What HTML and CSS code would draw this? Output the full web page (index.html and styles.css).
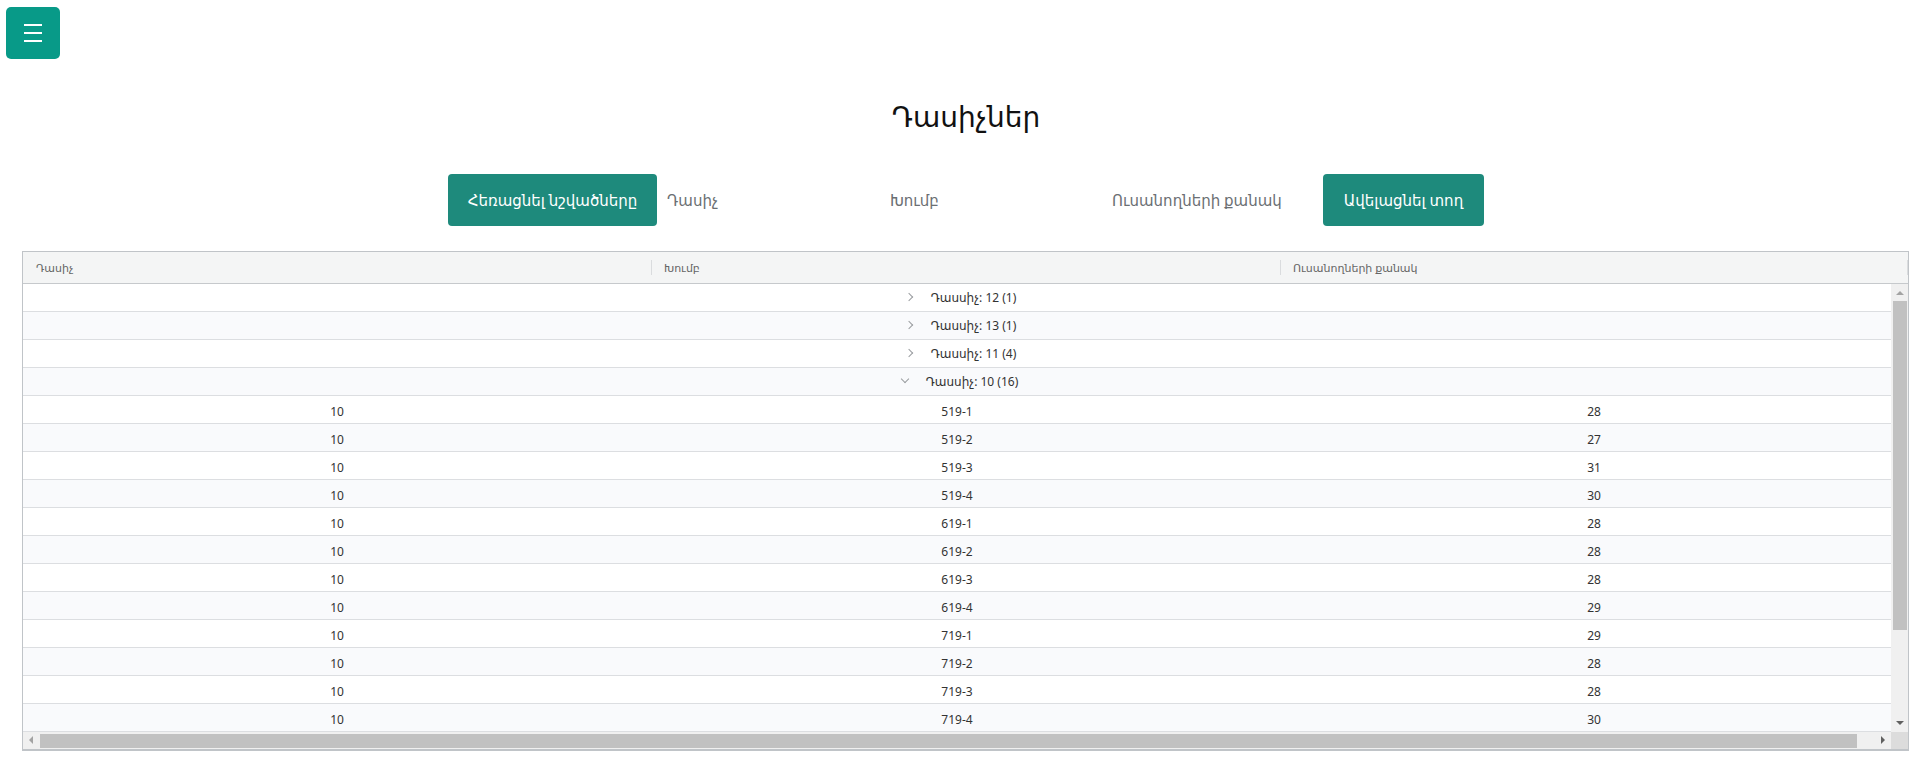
FILE: index.html
```html
<!DOCTYPE html>
<html lang="hy">
<head>
<meta charset="utf-8">
<title>Դասիչներ</title>
<link rel="stylesheet" href="styles.css">
</head>
<body>
<div class="topbar">
  <button class="menu-btn" aria-label="menu"><span></span><span></span><span></span></button>
</div>
<h1 class="title">Դասիչներ</h1>
<div class="toolbar">
  <button class="btn">Հեռացնել նշվածները</button>
  <span class="lbl lbl-1">Դասիչ</span>
  <span class="lbl lbl-2">Խումբ</span>
  <span class="lbl lbl-3">Ուսանողների քանակ</span>
  <button class="btn btn-add">Ավելացնել տող</button>
</div>
<div class="grid">
  <div class="grid-head">
    <div class="hcell">Դասիչ</div>
    <div class="hcell sep">Խումբ</div>
    <div class="hcell sep">Ուսանողների քանակ</div>
    <div class="hspacer"></div>
  </div>
  <div class="grid-main">
    <div class="rows">
      <div class="row group"><span class="chev chev-r"></span><span class="gtext">Դասսիչ: 12 (1)</span></div>
      <div class="row group alt"><span class="chev chev-r"></span><span class="gtext">Դասսիչ: 13 (1)</span></div>
      <div class="row group"><span class="chev chev-r"></span><span class="gtext">Դասսիչ: 11 (4)</span></div>
      <div class="row group alt"><span class="chev chev-d"></span><span class="gtext">Դասսիչ: 10 (16)</span></div>
      <div class="row data"><div class="c1">10</div><div class="c2">519-1</div><div class="c3">28</div></div>
      <div class="row data alt"><div class="c1">10</div><div class="c2">519-2</div><div class="c3">27</div></div>
      <div class="row data"><div class="c1">10</div><div class="c2">519-3</div><div class="c3">31</div></div>
      <div class="row data alt"><div class="c1">10</div><div class="c2">519-4</div><div class="c3">30</div></div>
      <div class="row data"><div class="c1">10</div><div class="c2">619-1</div><div class="c3">28</div></div>
      <div class="row data alt"><div class="c1">10</div><div class="c2">619-2</div><div class="c3">28</div></div>
      <div class="row data"><div class="c1">10</div><div class="c2">619-3</div><div class="c3">28</div></div>
      <div class="row data alt"><div class="c1">10</div><div class="c2">619-4</div><div class="c3">29</div></div>
      <div class="row data"><div class="c1">10</div><div class="c2">719-1</div><div class="c3">29</div></div>
      <div class="row data alt"><div class="c1">10</div><div class="c2">719-2</div><div class="c3">28</div></div>
      <div class="row data"><div class="c1">10</div><div class="c2">719-3</div><div class="c3">28</div></div>
      <div class="row data alt"><div class="c1">10</div><div class="c2">719-4</div><div class="c3">30</div></div>
    </div>
    <div class="vscroll">
      <div class="arrow arrow-up"></div>
      <div class="vtrack"><div class="vthumb"></div></div>
      <div class="arrow arrow-down"></div>
    </div>
  </div>
  <div class="grid-foot">
    <div class="hscroll">
      <div class="harrow arrow-left"></div>
      <div class="htrack"><div class="hthumb"></div></div>
      <div class="harrow arrow-right"></div>
    </div>
    <div class="corner"></div>
  </div>
</div>
</body>
</html>
```

FILE: styles.css
```css
* { box-sizing: border-box; }
html, body { margin: 0; padding: 0; background: #fff; }
body {
  font-family: "Noto Sans", "DejaVu Sans", sans-serif;
  color: #222;
  width: 1926px;
  height: 772px;
  overflow: hidden;
}
.topbar { padding: 7px 0 0 6px; height: 59px; }
.menu-btn {
  width: 54px; height: 52px;
  background: #089a88;
  border: 0; border-radius: 5px;
  display: flex; flex-direction: column; align-items: center; justify-content: center;
  gap: 6px; padding: 0;
}
.menu-btn span { display: block; width: 18px; height: 2px; background: #fff; }
.title {
  margin: 0; padding-top: 37px;
  text-align: center; font-weight: normal;
  font-size: 28px; line-height: 40px; color: #111;
  padding-left: 6px;
}
.toolbar {
  display: flex; align-items: center; justify-content: center;
  margin-top: 38px; padding-left: 6px;
  height: 52px;
}
.btn {
  height: 52px; border: 0; border-radius: 4px;
  background: #1e8a7c; color: #fff;
  font-family: inherit; font-size: 15px;
  padding: 0 18px;
}
.btn:first-child { width: 209px; margin-right: 10px; }
.btn-add { width: 161px; margin-left: 40px; }
.lbl { color: #6b6f73; font-size: 15px; white-space: nowrap; }
.lbl-1 { width: 223px; }
.lbl-2 { width: 222px; }
.lbl-3 { width: 171px; }

.grid {
  margin: 25px 17px 0 22px;
  border: 1px solid #c0c4c8;
  border-bottom-width: 2px;
  height: 500px;
  display: flex; flex-direction: column;
  font-size: 12px; color: #333;
}
.grid-head {
  display: grid;
  grid-template-columns: 628px 629px 611px 1fr;
  height: 32px;
  background: #f4f5f5;
  border-bottom: 1px solid #c6c9cc;
  color: #666;
  font-size: 11px;
}
.hcell { position: relative; display: flex; align-items: center; padding-left: 13px; }
.hcell.sep::before {
  content: ""; position: absolute; left: 0; top: 8px; bottom: 8px;
  width: 1px; background: #dadcde;
}
.hspacer { position: relative; }
.hspacer::after {
  content: ""; position: absolute; right: 0; top: 8px; bottom: 8px; width: 1px; background: #dadcde;
}
.grid-main { display: flex; height: 448px; }
.rows { width: 1868px; overflow: hidden; }
.row { height: 28px; border-bottom: 1px solid #dcdee1; background: #fff; }
.row.alt { background: #f9fafc; }
.group { display: flex; align-items: center; justify-content: center; padding-left: 8px; padding-bottom: 1px; }
.gtext { margin-left: 19px; }
.chev { display: inline-block; border-color: #9a9da0; border-style: solid; border-width: 0 1px 1px 0; }
.chev-r { transform: rotate(-45deg); width: 6px; height: 6px; }
.chev-d { transform: rotate(45deg); width: 6px; height: 6px; margin-top: -4px; margin-left: -2px; }
.chev-d + .gtext { margin-left: 18px; }
.data { display: grid; grid-template-columns: 628px 629px 611px; align-items: center; padding-top: 3px; }
.data > div { text-align: center; }
.c2 { padding-right: 17px; }
.c3 { padding-left: 17px; }

.vscroll { width: 17px; background: #f0f0f0; display: flex; flex-direction: column; }
.arrow { height: 17px; position: relative; }
.arrow::after {
  content: ""; position: absolute; left: 5px; top: 6px;
  border-left: 4px solid transparent; border-right: 4px solid transparent;
}
.arrow-up::after { border-bottom: 4px solid #a3a3a3; top: 7px; }
.arrow-down::after { border-top: 4px solid #606060; top: 6px; }
.vtrack { flex: 1; padding: 0 1px 0 2px; }
.vthumb { height: 329px; background: #c1c1c1; }

.grid-foot { display: flex; height: 17px; }
.hscroll { width: 1868px; background: #f0f0f0; display: flex; }
.harrow { width: 17px; position: relative; }
.harrow::after {
  content: ""; position: absolute; top: 4px;
  border-top: 4px solid transparent; border-bottom: 4px solid transparent;
}
.arrow-left::after { border-right: 4px solid #a3a3a3; left: 6px; }
.arrow-right::after { border-left: 4px solid #606060; left: 7px; }
.htrack { flex: 1; padding: 2px 0 1px 0; }
.hthumb { width: 1817px; height: 100%; background: #c1c1c1; }
.corner { flex: 1; background: #dcdcdc; }
```
